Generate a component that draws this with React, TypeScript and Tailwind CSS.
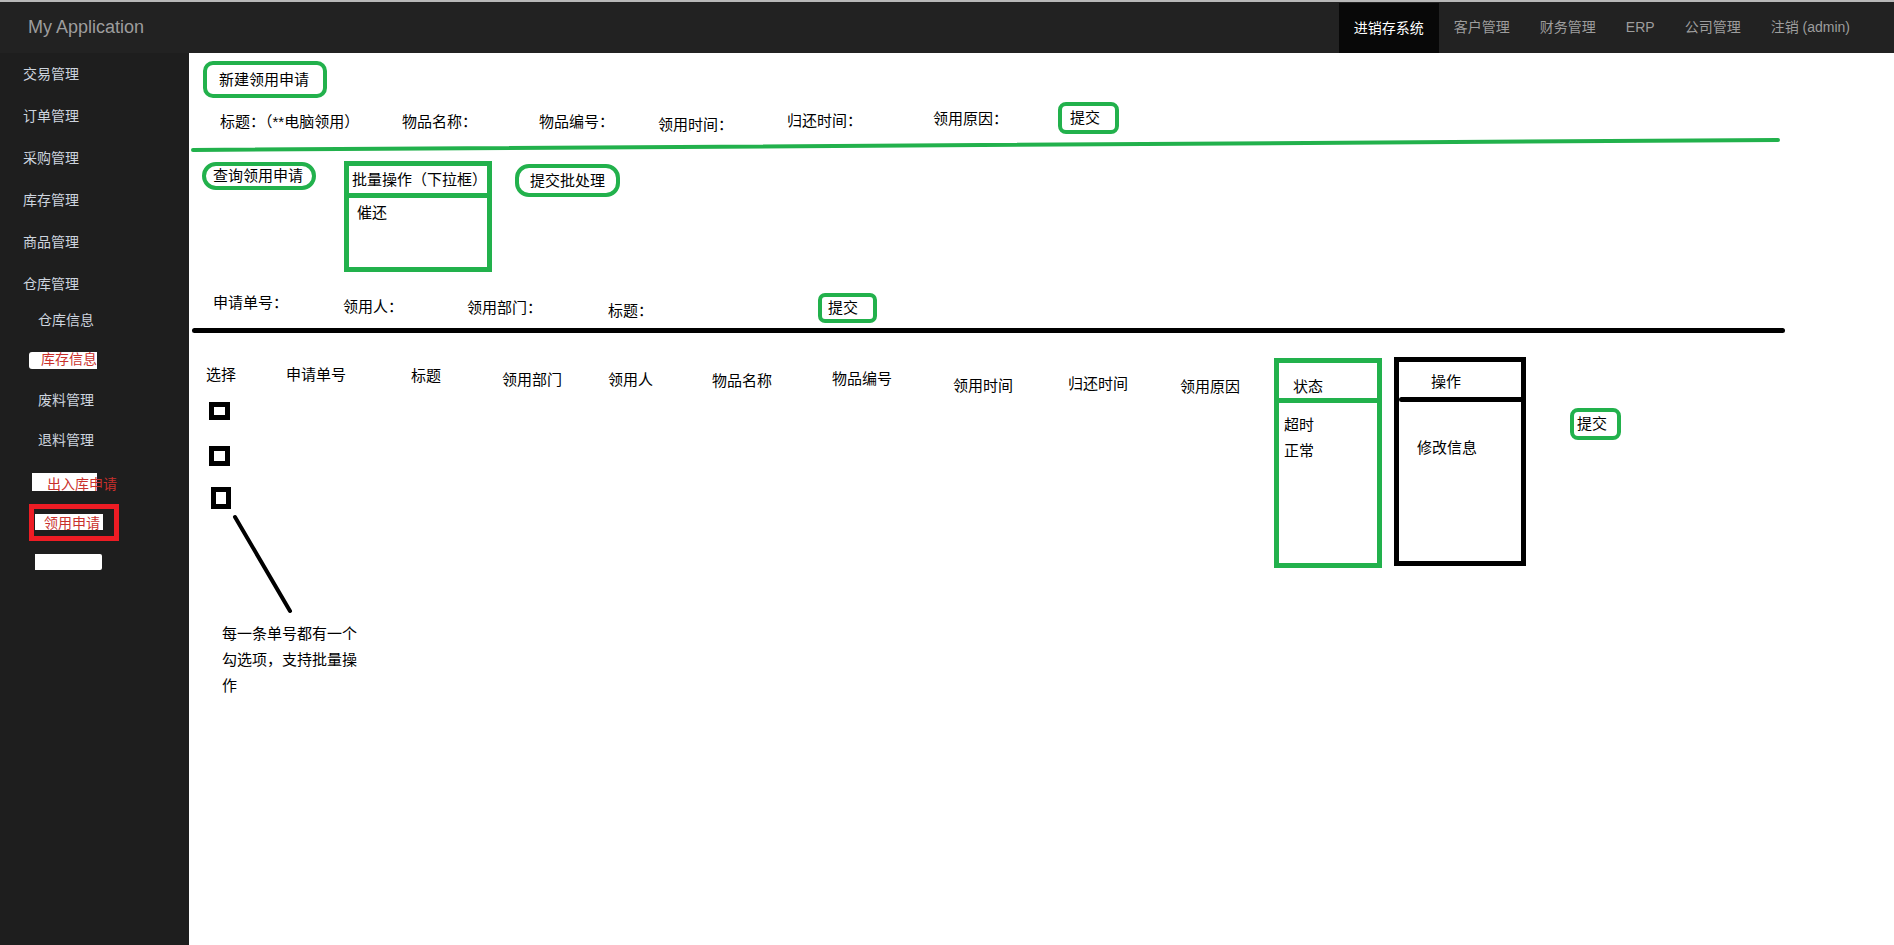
import React from 'react'

const GREEN = 'border-[#22b14c]'

const navItems = ['客户管理', '财务管理', 'ERP', '公司管理', '注销 (admin)']

const mainMenu = ['交易管理', '订单管理', '采购管理', '库存管理', '商品管理', '仓库管理']

// top form labels: width of slot, vertical offset
const newFields = [
    { label: '标题：（**电脑领用）', w: 'w-[182px]', mt: 'mt-[10px]' },
    { label: '物品名称：', w: 'w-[137px]', mt: 'mt-[10px]' },
    { label: '物品编号：', w: 'w-[119px]', mt: 'mt-[10px]' },
    { label: '领用时间：', w: 'w-[129px]', mt: 'mt-[13px]' },
    { label: '归还时间：', w: 'w-[146px]', mt: 'mt-[9px]' },
    { label: '领用原因：', w: 'w-[125px]', mt: 'mt-[7px]' },
]

const queryFields = [
    { label: '申请单号：', w: 'w-[130px]', mt: 'mt-0' },
    { label: '领用人：', w: 'w-[124px]', mt: 'mt-[4px]' },
    { label: '领用部门：', w: 'w-[141px]', mt: 'mt-[5px]' },
    { label: '标题：', w: 'w-[210px]', mt: 'mt-[8px]' },
]

const columns = [
    { label: '选择', w: 'w-[80px]', mt: 'mt-[8px]' },
    { label: '申请单号', w: 'w-[125px]', mt: 'mt-[8px]' },
    { label: '标题', w: 'w-[91px]', mt: 'mt-[9px]' },
    { label: '领用部门', w: 'w-[106px]', mt: 'mt-[13px]' },
    { label: '领用人', w: 'w-[104px]', mt: 'mt-[13px]' },
    { label: '物品名称', w: 'w-[120px]', mt: 'mt-[14px]' },
    { label: '物品编号', w: 'w-[121px]', mt: 'mt-[12px]' },
    { label: '领用时间', w: 'w-[115px]', mt: 'mt-[19px]' },
    { label: '归还时间', w: 'w-[112px]', mt: 'mt-[17px]' },
    { label: '领用原因', w: 'w-[70px]', mt: 'mt-[20px]' },
]

function Sidebar() {
    return (
        <aside className="w-[189px] shrink-0 bg-[#1e1e1e] text-[14px] leading-[20px] text-[#cdd4de]">
            {mainMenu.map(m => (
                <div key={m} className="h-[42px] flex items-center pl-[23px]">{m}</div>
            ))}

            <div className="h-[30px] flex items-center pl-[38px]">仓库信息</div>

            {/* scribbled-out item */}
            <div className="relative h-[48px] flex items-center pl-[41px]">
                <div className="absolute left-[29px] top-[17px] w-[68px] h-[17px] bg-white rounded-l-[3px]" />
                <span className="relative text-[#c9302c]">库存信息</span>
            </div>

            <div className="h-[34px] flex items-center pl-[38px]">废料管理</div>
            <div className="h-[46px] flex items-center pl-[38px]">退料管理</div>

            <div className="relative h-[41px] flex items-center pl-[47px]">
                <div className="absolute left-[32px] top-[10px] w-[65px] h-[18px] bg-white" />
                <span className="relative text-[#c9302c]">出入库申请</span>
            </div>

            <div className="relative ml-[29px] w-[90px] h-[37px] border-[5px] border-[#ed1c24] flex items-center pl-[10px]">
                <div className="absolute left-[1px] top-[5px] w-[68px] h-[16px] bg-white" />
                <span className="relative text-[#c9302c]">领用申请</span>
            </div>

            <div className="mt-[13px] ml-[35px] w-[67px] h-[16px] bg-white rounded-r-[2px]" />
        </aside>
    )
}

function TopBar() {
    return (
        <header className="shrink-0">
            <div className="h-[2px] bg-[#b8b8b8]" />
            <div className="h-[51px] bg-[#222222] flex items-center justify-between">
                <div className="pl-[28px] text-[18px] text-[#9d9d9d] font-['Liberation_Sans',sans-serif]">My Application</div>
                <nav className="flex h-full items-stretch pr-[29px] text-[14px]">
                    <div className="mt-[1px] px-[15px] flex items-center bg-[#080808] text-white">进销存系统</div>
                    {navItems.map(n => (
                        <div key={n} className="px-[15px] flex items-center text-[#9d9d9d]">{n}</div>
                    ))}
                </nav>
            </div>
        </header>
    )
}

export default function App() {
    return (
        <div className="w-[1894px] h-[945px] flex flex-col overflow-hidden bg-white font-['Liberation_Sans','Noto_Sans_CJK_SC',sans-serif]">
            <TopBar />
            <div className="flex flex-1 min-h-0">
                <Sidebar />

                <main className="flex-1 text-[15px] leading-[20px] text-black">
                    {/* 新建领用申请 */}
                    <div className="pt-[8px]">
                        <div className={`ml-[14px] w-[124px] h-[37px] border-4 ${GREEN} rounded-[10px] flex items-center pl-[12px]`}>
                            新建领用申请
                        </div>
                    </div>

                    <div className="mt-[4px] flex items-start pl-[31px] h-[32px]">
                        {newFields.map(f => (
                            <div key={f.label} className={`${f.w} ${f.mt} whitespace-nowrap`}>{f.label}</div>
                        ))}
                        <div className={`w-[61px] h-[32px] border-4 ${GREEN} rounded-[8px] flex items-center pl-[8px]`}>提交</div>
                    </div>

                    <svg width="1600" height="18" className="mt-[2px] block">
                        <line x1="4" y1="14" x2="1589" y2="4" stroke="#22b14c" strokeWidth="4" strokeLinecap="round" />
                    </svg>

                    {/* 查询领用申请 / 批量操作 */}
                    <div className="mt-[7px] flex items-start">
                        <div className={`ml-[13px] mt-[1px] w-[114px] h-[28px] border-4 ${GREEN} rounded-[14px] flex items-center pl-[7px] whitespace-nowrap`}>
                            查询领用申请
                        </div>
                        <div className={`ml-[28px] w-[148px] h-[111px] border-[5px] ${GREEN} flex flex-col`}>
                            <div className="h-[27px] flex items-center pl-[3px] whitespace-nowrap">批量操作（下拉框）</div>
                            <div className="h-[5px] bg-[#22b14c]" />
                            <div className="pt-[5px] pl-[8px]">催还</div>
                        </div>
                        <div className={`ml-[23px] mt-[3px] w-[105px] h-[33px] border-4 ${GREEN} rounded-[14px] flex items-center pl-[11px] whitespace-nowrap`}>
                            提交批处理
                        </div>
                    </div>

                    <div className="mt-[21px] flex items-start pl-[24px] h-[30px]">
                        {queryFields.map(f => (
                            <div key={f.label} className={`${f.w} ${f.mt} whitespace-nowrap`}>{f.label}</div>
                        ))}
                        <div className={`w-[59px] h-[30px] border-4 ${GREEN} rounded-[7px] flex items-center pl-[6px]`}>提交</div>
                    </div>

                    <div className="mt-[5px] ml-[3px] w-[1593px] h-[5px] bg-black rounded-full" />

                    {/* list */}
                    <div className="mt-[24px] flex items-start">
                        <div className="w-[1085px] shrink-0">
                            <div className="h-[45px] flex items-start pl-[17px]">
                                {columns.map(c => (
                                    <div key={c.label} className={`${c.w} ${c.mt} whitespace-nowrap`}>{c.label}</div>
                                ))}
                            </div>

                            <div className="pl-[20px] flex flex-col items-start">
                                <div className="w-[21px] h-[18px] border-[5px] border-black" />
                                <div className="mt-[26px] w-[21px] h-[20px] border-[5px] border-black" />
                                <div className="mt-[21px] ml-[2px] w-[20px] h-[22px] border-[5px] border-black" />
                            </div>

                            <svg width="120" height="102" className="mt-[4px] block">
                                <line x1="46" y1="4" x2="101" y2="98" stroke="#000" strokeWidth="4" strokeLinecap="round" />
                            </svg>

                            <div className="mt-[6px] ml-[33px] leading-[26px]">
                                每一条单号都有一个<br />
                                勾选项，支持批量操<br />
                                作
                            </div>
                        </div>

                        <div className={`mt-[1px] w-[108px] h-[210px] border-[5px] ${GREEN} flex flex-col`}>
                            <div className="h-[35px] pt-[14px] pl-[14px]">状态</div>
                            <div className="h-[5px] bg-[#22b14c]" />
                            <div className="pt-[9px] pl-[5px] leading-[26px]">
                                <div>超时</div>
                                <div>正常</div>
                            </div>
                        </div>

                        <div className="ml-[12px] w-[132px] h-[209px] border-[5px] border-black flex flex-col">
                            <div className="h-[35px] pt-[10px] pl-[32px]">操作</div>
                            <div className="h-[5px] bg-black rounded-l-full" />
                            <div className="pt-[36px] pl-[18px]">修改信息</div>
                        </div>

                        <div className={`ml-[44px] mt-[51px] w-[51px] h-[32px] border-4 ${GREEN} rounded-[8px] flex items-center pl-[3px]`}>
                            提交
                        </div>
                    </div>
                </main>
            </div>
        </div>
    )
}
